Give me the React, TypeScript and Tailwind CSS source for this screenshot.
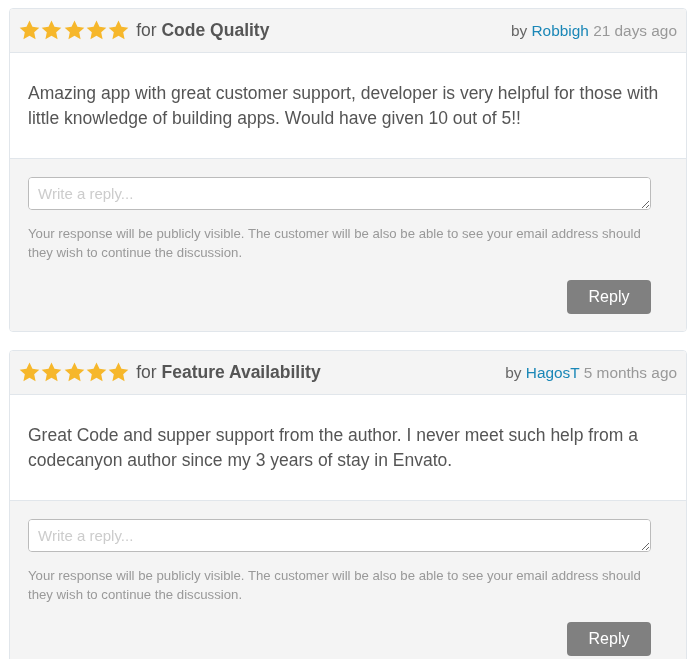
import React from 'react'

interface Review {
  id: number
  category: string
  author: string
  when: string
  body: string
}

const reviews: Review[] = [
  {
    id: 1,
    category: 'Code Quality',
    author: 'Robbigh',
    when: '21 days ago',
    body: 'Amazing app with great customer support, developer is very helpful for those with little knowledge of building apps. Would have given 10 out of 5!!',
  },
  {
    id: 2,
    category: 'Feature Availability',
    author: 'HagosT',
    when: '5 months ago',
    body: 'Great Code and supper support from the author. I never meet such help from a codecanyon author since my 3 years of stay in Envato.',
  },
]

function Star() {
  return (
    <svg width="21" height="20" viewBox="0 0 24 23" className="block">
      <path d="M12 0.6l3.4 7.3 7.9 0.9-5.9 5.4 1.6 7.9L12 18.1l-7 4 1.6-7.9L0.7 8.8l7.9-0.9z" fill="#f6b72b" />
    </svg>
  )
}

function ReviewCard({ review }: { review: Review }) {
  return (
    <div className="border border-[#e1e6eb] rounded-[4px] overflow-hidden">
      <div className="h-[43px] bg-[#f4f4f4] flex items-center justify-between pl-[9px] pr-[9px]">
        <div className="flex items-center">
          <div className="flex gap-[1.3px] mt-[-1px]">
            {[0, 1, 2, 3, 4].map((i) => (
              <Star key={i} />
            ))}
          </div>
          <span className="ml-[7px] text-[17.5px] text-[#555]">
            for <span className="font-bold">{review.category}</span>
          </span>
        </div>
        <div className="text-[15.4px] text-[#666]">
          by <span className="text-[#1a87b7]">{review.author}</span>{' '}
          <span className="text-[#999]">{review.when}</span>
        </div>
      </div>
      <div className="bg-white border-t border-[#e1e6eb] h-[106px] flex items-center pl-[18px] pr-[20px]">
        <p className="text-[17.5px] leading-[25px] text-[#555]">{review.body}</p>
      </div>
      <div className="bg-[#f4f4f4] border-t border-[#e1e6eb] pt-[18px] pb-[17px] pl-[18px] pr-[35px]">
        <textarea
          rows={1}
          placeholder="Write a reply..."
          className="block w-full h-[33px] border border-[#bbb] rounded-[4px] bg-white px-[9px] py-[5px] text-[15px] text-[#555] placeholder:text-[#ccc] outline-none"
        />
        <p className="mt-[14px] text-[13.2px] leading-[19px] text-[#999]">
          Your response will be publicly visible. The customer will be also be able to see your email address should
          they wish to continue the discussion.
        </p>
        <div className="flex justify-end mt-[18px]">
          <button className="w-[84px] h-[34px] rounded-[4px] bg-[#808080] text-white text-[16px]">Reply</button>
        </div>
      </div>
    </div>
  )
}

export default function App() {
  return (
    <div className="bg-white min-h-screen pt-[8px] pl-[9px] pr-[8px] font-['Liberation_Sans',Arial,sans-serif]">
      <div className="flex flex-col gap-[18px]">
        {reviews.map((r) => (
          <ReviewCard key={r.id} review={r} />
        ))}
      </div>
    </div>
  )
}
